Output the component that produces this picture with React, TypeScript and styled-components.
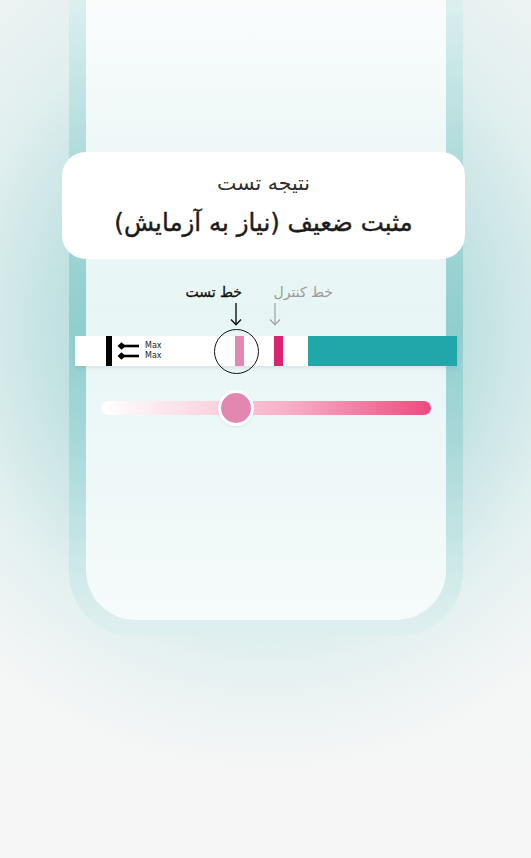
import styled, { createGlobalStyle } from "styled-components";

const GlobalStyle = createGlobalStyle`
  html, body {
    margin: 0;
    padding: 0;
  }
  body {
    font-family: "DejaVu Sans", "Noto Sans", sans-serif;
    background: #f6f6f6;
  }
`;

const Arrow: React.FC<{ color: string; width?: number }> = ({ color, width = 1.4 }) => (
  <svg width="12" height="23" viewBox="0 0 12 23" fill="none">
    <path d="M6 0 V21.5" stroke={color} strokeWidth={width} />
    <path d="M1 16.5 L6 21.8 L11 16.5" stroke={color} strokeWidth={width} strokeLinejoin="miter" />
  </svg>
);

const MaxArrows: React.FC = () => (
  <svg width="22" height="20" viewBox="0 0 22 20">
    <path d="M4 5 H22" stroke="#000" strokeWidth="2.6" />
    <path d="M0.5 5 L4.5 1.3 L8.5 5 L4.5 8.7 Z" fill="#000" />
    <path d="M4 15 H22" stroke="#000" strokeWidth="2.6" />
    <path d="M0.5 15 L4.5 11.3 L8.5 15 L4.5 18.7 Z" fill="#000" />
  </svg>
);

const App: React.FC = () => {
  return (
    <Page>
      <GlobalStyle />
      <Frame>
        <Screen>
          <ResultCard dir="rtl">
            <CardLabel>{"نتیجه تست"}</CardLabel>
            <CardValue>{"مثبت ضعیف (نیاز به آزمایش)"}</CardValue>
          </ResultCard>

          <Markers>
            <Marker $width={50} $arrowOffset={38}>
              <MarkerLabel dir="rtl" $muted={false}>{"خط تست"}</MarkerLabel>
              <Arrow color="#111" />
            </Marker>
            <Marker $width={64} $arrowOffset={0}>
              <MarkerLabel dir="rtl" $muted>{"خط کنترل"}</MarkerLabel>
              <Arrow color="#9a9a9a" width={1.1} />
            </Marker>
          </Markers>

          <Strip>
            <HandleBar />
            <MaxGroup>
              <MaxArrows />
              <MaxTexts>
                <span>Max</span>
                <span>Max</span>
              </MaxTexts>
            </MaxGroup>
            <TestLine />
            <Lens />
            <ControlLine />
            <Absorbent />
          </Strip>

          <Slider>
            <SliderTrack />
            <SliderThumb style={{ left: `${(236 - 101) / 330 * 100}%` }} />
          </Slider>
        </Screen>
      </Frame>
    </Page>
  );
};

const Page = styled.div`
  min-height: 858px;
  overflow: hidden;
  background:
    radial-gradient(ellipse 420px 440px at 50% 330px, rgba(150, 208, 208, 0.95) 0%, rgba(170, 216, 216, 0.75) 45%, rgba(205, 232, 232, 0.4) 75%, rgba(246, 246, 246, 0) 100%),
    linear-gradient(180deg, #eef3f3 0%, #f4f6f6 60%, #f6f6f6 100%);
`;

const Frame = styled.div`
  width: 360px;
  margin: 0 0 0 69px;
  padding: 0 17px 16px;
  background: linear-gradient(180deg, #dcefef 0%, #a6d7d7 30%, #90cece 52%, #a9d9d9 70%, #d9eded 95%, #dfefef 100%);
  border-radius: 0 0 64px 64px;
`;

const Screen = styled.div`
  height: 620px;
  box-sizing: border-box;
  padding-top: 152px;
  display: flex;
  flex-direction: column;
  border-radius: 0 0 50px 50px;
  background: linear-gradient(180deg, #fafcfc 0%, #eef8f8 25%, #e8f5f5 50%, #eef8f8 75%, #f6fbfb 100%);
`;

const ResultCard = styled.div`
  width: 403px;
  height: 107px;
  margin-left: -24px;
  box-sizing: border-box;
  padding-top: 17px;
  background: #fff;
  border-radius: 24px;
  display: flex;
  flex-direction: column;
  align-items: center;
  gap: 8px;
`;

const CardLabel = styled.div`
  font-size: 20.5px;
  line-height: 28px;
  color: #2e2e2e;
`;

const CardValue = styled.div`
  font-size: 24.5px;
  line-height: 36px;
  color: #1c1c1c;
  -webkit-text-stroke: 0.4px #1c1c1c;
`;

const Markers = styled.div`
  display: flex;
  padding-left: 106px;
  margin-top: 24px;
  gap: 27px;
`;

const Marker = styled.div<{ $width: number; $arrowOffset: number }>`
  width: ${({ $width }) => $width}px;
  display: flex;
  flex-direction: column;
  gap: 2px;

  svg {
    margin-left: ${({ $arrowOffset }) => $arrowOffset}px;
  }
`;

const MarkerLabel = styled.div<{ $muted: boolean }>`
  font-size: 14px;
  line-height: 18px;
  white-space: nowrap;
  text-align: ${({ $muted }) => ($muted ? "left" : "right")};
  padding-left: ${({ $muted }) => ($muted ? "9px" : "0")};
  color: ${({ $muted }) => ($muted ? "#9a9a9a" : "#111")};
  -webkit-text-stroke: ${({ $muted }) => ($muted ? "0" : "0.3px #111")};
`;

const Strip = styled.div`
  position: relative;
  width: 382px;
  height: 30px;
  margin: 10px 0 0 -11px;
  background: #fff;
  display: flex;
  align-items: center;
  box-shadow: 0 2px 4px rgba(0, 0, 0, 0.08);
`;

const HandleBar = styled.div`
  width: 6px;
  height: 30px;
  margin-left: 31px;
  background: #000;
`;

const MaxGroup = styled.div`
  display: flex;
  align-items: center;
  gap: 6px;
  margin-left: 5px;
`;

const MaxTexts = styled.div`
  display: flex;
  flex-direction: column;
  font-family: "DejaVu Sans", sans-serif;
  font-size: 8px;
  line-height: 10px;
  color: #222;
`;

const TestLine = styled.div`
  width: 9px;
  height: 30px;
  margin-left: 73px;
  background: #e389b1;
`;

const Lens = styled.div`
  position: absolute;
  left: 139px;
  top: -7px;
  width: 43px;
  height: 43px;
  border: 1px solid #111;
  border-radius: 50%;
`;

const ControlLine = styled.div`
  width: 9px;
  height: 30px;
  margin-left: 30px;
  background: #d9256f;
`;

const Absorbent = styled.div`
  flex: 0 0 149px;
  height: 30px;
  margin-left: auto;
  background: #21a6aa;
`;

const Slider = styled.div`
  position: relative;
  width: 330px;
  height: 14px;
  margin: 35px 0 0 15px;
`;

const SliderTrack = styled.div`
  height: 14px;
  border-radius: 7px;
  background: linear-gradient(90deg, #ffffff 0%, #fbd9e4 30%, #f6a9c3 60%, #f06e98 85%, #ee4a80 100%);
`;

const SliderThumb = styled.div`
  position: absolute;
  top: 50%;
  width: 30px;
  height: 30px;
  border: 3px solid #fff;
  border-radius: 50%;
  background: #e187b0;
  transform: translate(-50%, -50%);
  box-shadow: 0 1px 3px rgba(0, 0, 0, 0.08);
`;

export default App;
